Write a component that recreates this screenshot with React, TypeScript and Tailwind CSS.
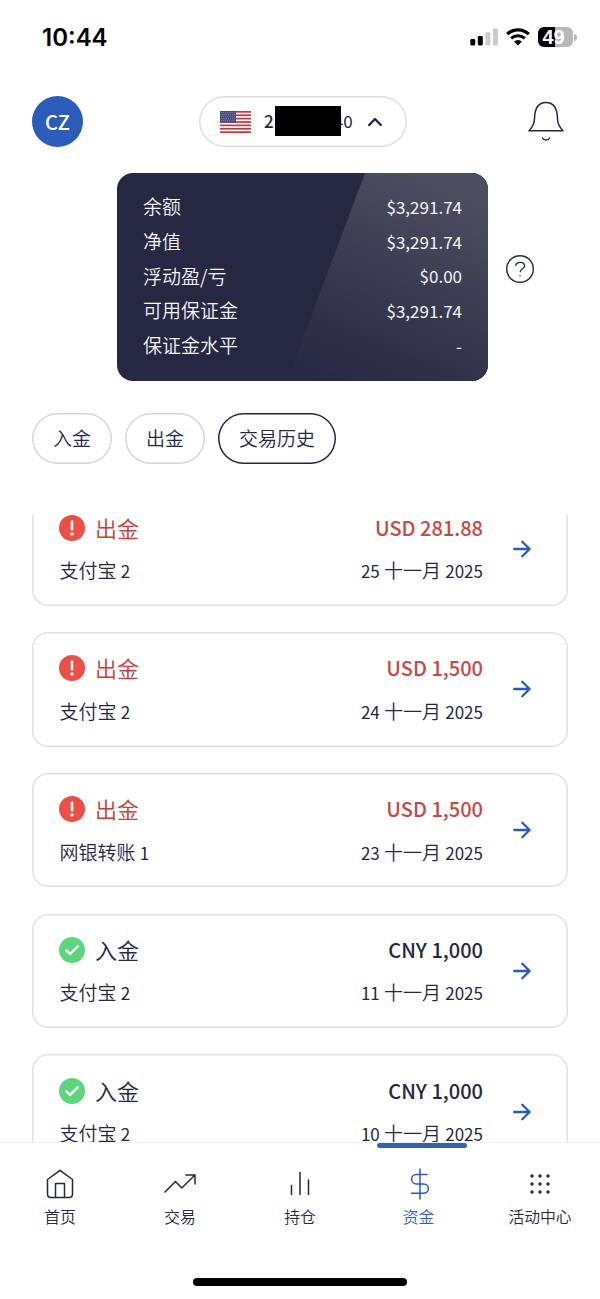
import type { ReactNode } from "react"

type Transaction = {
  kind: "deposit" | "withdrawal"
  method: string
  account: string
  amount: string
  day: string
}

const balances = [
  { label: "余额", value: "$3,291.74" },
  { label: "净值", value: "$3,291.74" },
  { label: "浮动盈/亏", value: "$0.00" },
  { label: "可用保证金", value: "$3,291.74" },
  { label: "保证金水平", value: "-" },
]

const transactions: Transaction[] = [
  { kind: "withdrawal", method: "支付宝", account: "2", amount: "USD 281.88", day: "25" },
  { kind: "withdrawal", method: "支付宝", account: "2", amount: "USD 1,500", day: "24" },
  { kind: "withdrawal", method: "网银转账", account: "1", amount: "USD 1,500", day: "23" },
  { kind: "deposit", method: "支付宝", account: "2", amount: "CNY 1,000", day: "11" },
  { kind: "deposit", method: "支付宝", account: "2", amount: "CNY 1,000", day: "10" },
]

function StatusBar(): React.JSX.Element {
  return (
    <div className="flex h-[74px] shrink-0 items-center justify-between pr-[23px] pl-[42px]">
      <span className="pt-px font-['Inter',sans-serif] text-[24px] leading-none font-semibold text-black">10:44</span>
      <div className="flex items-center">
        <svg className="h-[18px] w-7" viewBox="0 0 28 18" aria-hidden="true">
          <rect x="0.3" y="11" width="5" height="6.5" rx="1.4" fill="#000" />
          <rect x="7.8" y="8" width="5" height="9.5" rx="1.4" fill="#000" />
          <rect x="15.4" y="4.3" width="5" height="13.2" rx="1.4" fill="#cbcbcb" />
          <rect x="22.9" y="0.6" width="5" height="16.9" rx="1.4" fill="#cbcbcb" />
        </svg>
        <svg className="ml-2 h-[18px] w-6" viewBox="0 0 24 18" fill="none" aria-hidden="true">
          <path d="M1.2 6.1a15.7 15.7 0 0 1 21.6 0" stroke="#000" strokeWidth="3.2" />
          <path d="M5.2 10.3a10 10 0 0 1 13.6 0" stroke="#000" strokeWidth="3" />
          <path d="M8.1 13.6a5.8 5.8 0 0 1 7.8 0L12 17.4Z" fill="#000" />
        </svg>
        <div className="ml-2 flex h-5 w-[35px] items-center justify-center rounded-[6px] bg-linear-to-r from-black from-49% to-[#b8b8b8] to-49% pr-1 font-['Liberation_Sans',sans-serif] text-[20px] leading-none font-bold text-white">
          49
        </div>
        <span className="ml-px h-[7px] w-[3px] rounded-r-full bg-[#b8b8b8]" />
      </div>
    </div>
  )
}

function UsFlag(): React.JSX.Element {
  const stars = []
  for (let row = 0; row < 5; row++) {
    for (let col = 0; col < 7; col++) {
      stars.push(<circle key={`${row}-${col}`} cx={1.5 + col * 2.1 + (row % 2) * 0.6} cy={1.4 + row * 2.1} r="0.45" fill="#c3c6dc" />)
    }
  }
  return (
    <svg className="h-[22px] w-[31px] shadow-[0_2px_10px_rgba(0,0,0,0.06)]" viewBox="0 0 31 22" aria-hidden="true">
      <rect width="31" height="22" fill="#fff" />
      {[0, 1, 2, 3, 4, 5, 6].map((i) => (
        <rect key={i} y={i * 3.385} width="31" height="1.69" fill="#b93a47" />
      ))}
      <rect width="16" height="11.8" fill="#494b7d" />
      {stars}
    </svg>
  )
}

function Header(): React.JSX.Element {
  return (
    <header className="flex shrink-0 items-center pt-[22px] pr-9 pl-8">
      <div className="flex size-[51px] items-center justify-center rounded-full bg-[#2b5cb9] text-[20px] leading-none font-medium text-white">
        CZ
      </div>
      <button className="ml-[116px] flex h-[51px] w-[208px] items-center rounded-full pl-[21px] text-[17px] font-medium inset-ring-[1.5px] inset-ring-[#dfdfe3]">
        <UsFlag />
        <span className="ml-[13px] -mt-px">2</span>
        <span className="relative z-10 ml-[1px] h-[30px] w-[66px] -translate-y-px bg-black" />
        <span className="-ml-[7px] -mt-px font-normal">40</span>
        <svg className="ml-[15px] h-3 w-[14px]" viewBox="0 0 14 12" fill="none" aria-hidden="true">
          <path d="M1.2 9 7 3l5.8 6" stroke="currentColor" strokeWidth="2.4" strokeLinecap="round" strokeLinejoin="round" />
        </svg>
      </button>
      <svg className="ml-auto h-10 w-9 -translate-y-px" viewBox="0 0 36 40" fill="none" stroke="currentColor" strokeWidth="1.5" aria-hidden="true">
        <path d="M1 29.8h34c-3.3-3.3-5.4-7-5.5-12C29.4 8.5 27 1.4 18 1.4S6.6 8.5 6.5 17.8C6.4 22.8 4.3 26.5 1 29.8Z" strokeLinejoin="round" />
        <path d="M14.5 37c1.3 2.6 5.700 2.600 7 0" strokeLinecap="round" />
      </svg>
    </header>
  )
}

function BalanceCard(): React.JSX.Element {
  return (
    <section className="mt-[26px] flex shrink-0 items-center pl-[117px]">
      <div className="relative h-[208px] w-[371px] overflow-hidden rounded-[16px] bg-[#262741] pt-[16px] text-[#f2f2f7]">
        <svg className="absolute inset-0 h-full w-full" viewBox="0 0 371 208" aria-hidden="true">
          <defs>
            <linearGradient id="sheen" gradientUnits="userSpaceOnUse" x1="300" y1="-5" x2="205" y2="215">
              <stop offset="0" stopColor="#4d4e60" />
              <stop offset="1" stopColor="#262741" />
            </linearGradient>
          </defs>
          <path d="M248 0H371V208H170Z" fill="url(#sheen)" />
        </svg>
        <dl className="relative px-[26px]">
          {balances.map((item) => (
            <div key={item.label} className="flex h-[34.7px] items-center justify-between leading-none">
              <dt className="-mt-px text-[19px] font-[350]">{item.label}</dt>
              <dd className="text-[17px] font-normal">{item.value}</dd>
            </div>
          ))}
        </dl>
      </div>
      <svg className="ml-[17px] h-[30px] w-[30px] -translate-y-2" viewBox="0 0 30 30" fill="none" stroke="currentColor" strokeWidth="1.4" aria-hidden="true">
        <circle cx="15" cy="15" r="13.3" />
        <path d="M10.8 11.5c.5-4.2 8.4-4.4 8.8.2.2 3.2-4.4 2.900-4.400 6" strokeWidth="1.3" strokeLinecap="round" />
        <circle cx="15" cy="21.8" r=".7" fill="currentColor" stroke="none" />
      </svg>
    </section>
  )
}

function Pill({ active = false, children }: { active?: boolean; children: ReactNode }): React.JSX.Element {
  return (
    <button
      className={`flex h-[51px] items-center rounded-full px-[21px] pb-[2px] text-[19px] leading-none font-[350] inset-ring-[1.5px] ${active ? "inset-ring-[#262741]" : "inset-ring-[#d6d6da]"}`}
    >
      {children}
    </button>
  )
}

function StatusIcon({ kind }: { kind: Transaction["kind"] }): React.JSX.Element {
  if (kind === "withdrawal") {
    return (
      <svg className="size-[26px]" viewBox="0 0 26 26" aria-hidden="true">
        <circle cx="13" cy="13" r="13" fill="#eb4f46" />
        <path d="M13 6.5v7.7" stroke="#fff" strokeWidth="2.6" strokeLinecap="round" />
        <circle cx="13" cy="18.9" r="1.7" fill="#fff" />
      </svg>
    )
  }
  return (
    <svg className="size-[26px]" viewBox="0 0 26 26" fill="none" aria-hidden="true">
      <circle cx="13" cy="13" r="13" fill="#5dd57b" />
      <path d="m7.3 13.3 3.8 3.6 7.6-7.6" stroke="#fff" strokeWidth="2.5" strokeLinecap="round" strokeLinejoin="round" />
    </svg>
  )
}

function TransactionCard({ item }: { item: Transaction }): React.JSX.Element {
  const withdrawal = item.kind === "withdrawal"
  return (
    <article className="flex h-[114.5px] shrink-0 items-center rounded-[16px] pr-[37px] pl-[27px] inset-ring-[1.5px] inset-ring-[#e1e1e3]">
      <div className="flex flex-1 flex-col gap-[14px]">
        <div className="flex h-[28px] items-center justify-between">
          <span className={`flex items-center text-[22px] leading-none font-[350] ${withdrawal ? "text-[#c0433d]" : ""}`}>
            <StatusIcon kind={item.kind} />
            <span className="ml-[10px] -mt-[2px]">{withdrawal ? "出金" : "入金"}</span>
          </span>
          <span className={`text-[20px] leading-none font-medium ${withdrawal ? "text-[#c54a45]" : ""}`}>{item.amount}</span>
        </div>
        <div className="flex h-[28px] items-center justify-between text-[19px] leading-none font-[350]">
          <span className="pl-[0.5px]">
            {item.method} <span className="text-[17px] font-normal">{item.account}</span>
          </span>
          <span>
            <span className="text-[17px] font-normal">{item.day}</span> 十一月 <span className="text-[17px] font-normal">2025</span>
          </span>
        </div>
      </div>
      <svg className="ml-[30px] h-[18px] w-[18px]" viewBox="0 0 18 18" fill="none" stroke="#2b5cb9" strokeWidth="2.3" strokeLinecap="round" strokeLinejoin="round" aria-hidden="true">
        <path d="M1.2 9h15.4M9.3 1.7 16.6 9l-7.3 7.3" />
      </svg>
    </article>
  )
}

function NavItem({ label, active = false, children }: { label: string; active?: boolean; children: ReactNode }): React.JSX.Element {
  return (
    <a className={`relative flex flex-col items-center pt-[25px] text-[15.8px] leading-none font-[350] ${active ? "text-[#2b5cb9]" : ""}`}>
      {active ? <span className="absolute top-0 left-[17px] h-[5px] w-[90px] rounded-full bg-[#3560b5]" /> : null}
      <svg className="h-8 w-8" viewBox="0 0 32 32" fill="none" stroke="currentColor" strokeWidth="1.5" strokeLinecap="round" strokeLinejoin="round" aria-hidden="true">
        {children}
      </svg>
      <span className={`mt-[9px] ${active ? "-ml-[3px]" : ""}`}>{label}</span>
    </a>
  )
}

function BottomNav(): React.JSX.Element {
  return (
    <nav className="grid h-[108px] shrink-0 grid-cols-5 border-t border-[#f0f0f2] bg-white">
      <NavItem label="首页">
        <path d="M16 2.3 28.5 11.5V26.5a3 3 0 0 1-3 3h-19a3 3 0 0 1-3-3V11.5Z" />
        <path d="M11.500 29.3V15.6h9v13.7" />
      </NavItem>
      <NavItem label="交易">
        <path d="M1 24 11.5 13.5 17.8 20 31 7M21.8 7H31v9" />
      </NavItem>
      <NavItem label="持仓">
        <path d="M7.5 17.5v9M16 4.5v22M24.5 12v14.5" />
      </NavItem>
      <NavItem label="资金" active>
        <path d="M16 1v30M23 6.5H12.3a4.7 4.7 0 0 0 0 9.4h7.4a4.700 4.700 0 0 1 0 9.400H7.500" />
      </NavItem>
      <NavItem label="活动中心">
        {[8, 16, 24].map((y) => [8, 16, 24].map((x) => <circle key={`${x}-${y}`} cx={x} cy={y} r="1.7" fill="currentColor" stroke="none" />))}
      </NavItem>
    </nav>
  )
}

export default function App(): React.JSX.Element {
  return (
    <div className="flex h-[1299px] w-[600px] flex-col overflow-hidden bg-white font-['Noto_Sans_CJK_SC',sans-serif] text-[#262741]">
      <StatusBar />
      <Header />
      <BalanceCard />
      <div className="mt-8 flex shrink-0 gap-[13px] px-8">
        <Pill>入金</Pill>
        <Pill>出金</Pill>
        <Pill active>交易历史</Pill>
      </div>
      {/* the list is scrolled a little, so its first card starts above the edge */}
      <main className="mt-[51px] h-[627px] shrink-0 overflow-hidden px-8">
        <div className="-mt-[23.75px] flex flex-col gap-[26.25px]">
          {transactions.map((item) => (
            <TransactionCard key={item.day} item={item} />
          ))}
        </div>
      </main>
      <BottomNav />
      <div className="flex flex-1 justify-center pt-7">
        <span className="h-2 w-[214px] rounded-full bg-black" />
      </div>
    </div>
  )
}
